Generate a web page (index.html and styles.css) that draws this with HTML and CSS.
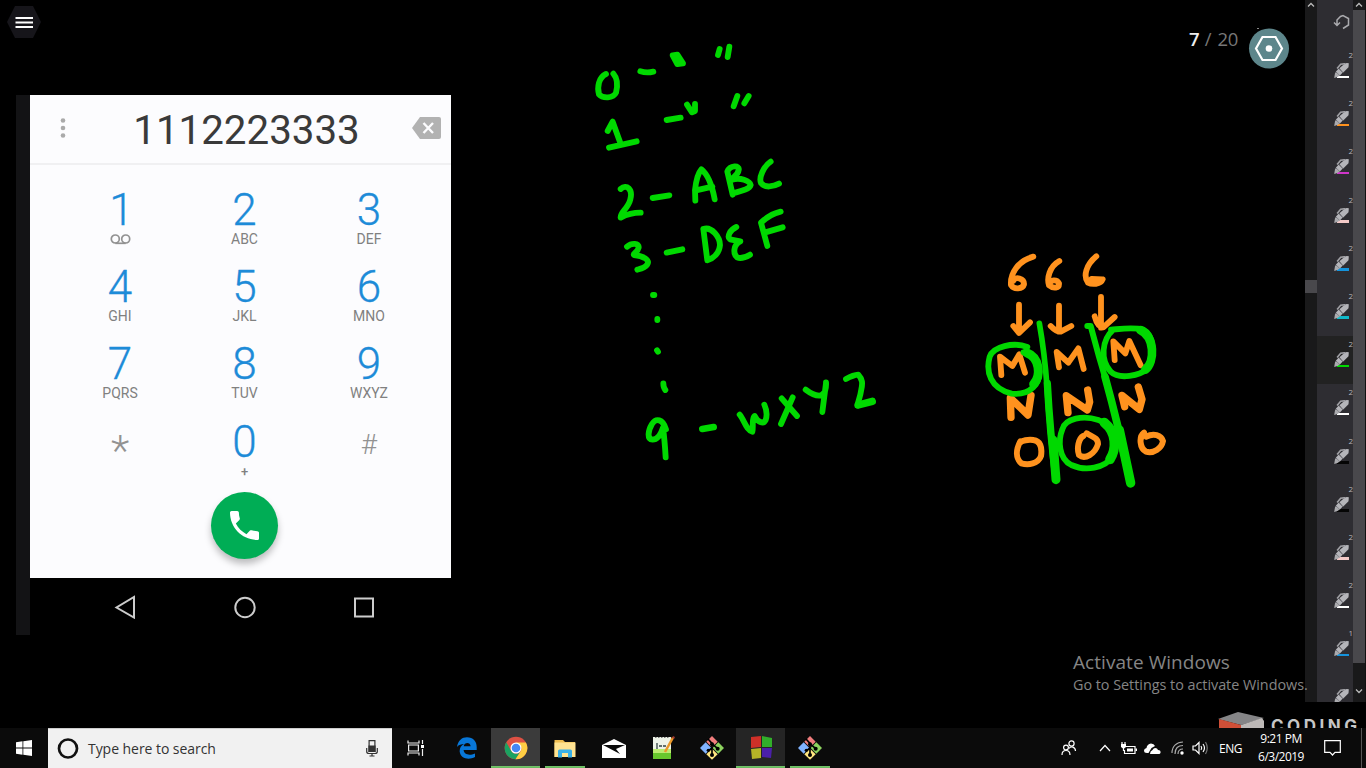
FILE: index.html
```html
<!DOCTYPE html>
<html lang="en">
<head>
<meta charset="utf-8">
<title>Whiteboard</title>
<link rel="stylesheet" href="styles.css">
</head>
<body>
<svg class="defs" width="0" height="0">
  <symbol id="pen" viewBox="0 0 45 46">
    <path d="M0 46L3 29L12 28L17 37L12 42Z" fill="#aaaaae"/>
    <path d="M5 27L14 17L26 29L17 39Z" fill="#b5b5ba"/>
    <path d="M16 16L32 2Q37-1 45 1L44 13L27 30Z" fill="#b5b5ba"/>
    <path d="M9 17L20 4L34 2" fill="none" stroke="#a0a0a5" stroke-width="5"/>
    <path d="M5 27L17 38M15 17L27 29" stroke="#55555a" stroke-width="1.500"/>
  </symbol>
  <symbol id="git" viewBox="0 0 72 72">
    <path d="M36 0L53 17L36 34L19 17Z" fill="#f07d7d"/>
    <path d="M17 19L34 36L17 53L0 36Z" fill="#80b3ff"/>
    <path d="M55 19L72 36L55 53L38 36Z" fill="#8dd35f"/>
    <path d="M36 38L53 55L36 71L19 55Z" fill="#ffe680"/>
    <path d="M24 9L36 22V57M36 23L53 38M36 36L26 44" fill="none" stroke="#000" stroke-width="5"/>
    <circle cx="36" cy="25" r="6"/><circle cx="53" cy="38" r="6"/><circle cx="36" cy="57" r="6"/><circle cx="25" cy="43" r="5"/>
  </symbol>
</svg>

<main class="workspace">
  <section class="board">
    <header class="board-head">
      <svg class="menu" width="36" height="34" viewBox="0 0 36 34"><path d="M9 1H27L35 17L27 33H9L1 17Z" fill="#16151a"/><path d="M9.500 13H27M9.500 17.500H27M9.500 22H27" stroke="#fff" stroke-width="2"/></svg>
      <div class="pager"><b>7</b><span>/</span><span>20</span></div>
      <svg class="badge" width="42" height="42" viewBox="0 0 42 42"><circle cx="21" cy="21.500" r="20" fill="#5d868b"/><path d="M14.500 10H27.500L34 21.500L27.500 33H14.500L8 21.500Z" fill="none" stroke="#fff" stroke-width="2.200"/><circle cx="21" cy="21.500" r="3.300" fill="#fff"/><path d="M9 1.500h2" stroke="#888"/></svg>
    </header>

    <div class="phone">
      <div class="screen">
        <div class="dialed">
          <svg width="6" height="22" viewBox="0 0 6 22" fill="#aaa"><circle cx="3" cy="3.500" r="2.300"/><circle cx="3" cy="11" r="2.300"/><circle cx="3" cy="18.500" r="2.300"/></svg>
          <div class="number">1112223333</div>
          <svg width="29" height="22" viewBox="0 0 29 22"><path d="M8 0H27Q29 0 29 2V20Q29 22 27 22H8L0 11Z" fill="#b2b2b2"/><path d="M11.500 6L21 16M21 6L11.500 16" stroke="#fcfcfe" stroke-width="2.400"/></svg>
        </div>
        <div class="keys">
          <div class="key one"><b>1</b><svg class="vm" width="21" height="11" viewBox="0 0 21 11" fill="none" stroke="#929292" stroke-width="1.700"><circle cx="5.300" cy="5" r="4"/><circle cx="15.700" cy="5" r="4"/><path d="M5.300 9.300H15.700"/></svg></div>
          <div class="key"><b>2</b><span>ABC</span></div>
          <div class="key"><b>3</b><span>DEF</span></div>
          <div class="key"><b>4</b><span>GHI</span></div>
          <div class="key"><b>5</b><span>JKL</span></div>
          <div class="key"><b>6</b><span>MNO</span></div>
          <div class="key"><b>7</b><span>PQRS</span></div>
          <div class="key"><b>8</b><span>TUV</span></div>
          <div class="key"><b>9</b><span>WXYZ</span></div>
          <div class="key sym star"><b>*</b></div>
          <div class="key"><b>0</b><span class="plus">+</span></div>
          <div class="key sym hash"><b>#</b></div>
        </div>
        <div class="call"><svg width="29" height="29" viewBox="3 3 18 18"><path fill="#fff" d="M6.620 10.790c1.440 2.830 3.760 5.140 6.590 6.590l2.200-2.200c.27-.27.67-.36 1.020-.24 1.120.37 2.330.57 3.570.57.55 0 1 .45 1 1V20c0 .55-.45 1-1 1-9.390 0-17-7.610-17-17 0-.55.45-1 1-1h3.500c.55 0 1 .45 1 1 0 1.250.2 2.450.57 3.570.11.35.03.74-.25 1.020l-2.200 2.200z"/></svg></div>
      </div>
      <div class="nav">
        <svg width="24" height="24" viewBox="0 0 24 24"><path d="M21 2V22.500L3.500 12.500Z"/></svg>
        <svg width="24" height="24" viewBox="0 0 24 24"><circle cx="12" cy="12.500" r="9.700"/></svg>
        <svg width="24" height="24" viewBox="0 0 24 24"><rect x="3" y="3.500" width="18" height="18"/></svg>
      </div>
    </div>

    <svg class="ink" width="1305" height="728" viewBox="0 0 1305 728">
      <g class="green" transform="translate(580 30) scale(.33333)">
        <path d="M78 132C56 142 51 172 57 193C68 206 100 206 108 188C114 165 112 145 100 131M181 124Q200 130 220 125M278 76L292 102L309 100L292 74ZM419 57L414 75M448 50L443 81"/>
        <path d="M83 303L98 275L123 344M87 353L170 334M260 270L302 263M321 224L336 247L345 243L345 222M472 198L461 229M506 198L493 220"/>
        <path d="M122 477C140 461 159 478 151 508C145 535 119 548 122 563Q150 548 182 548M218 504L268 496M346 512L345 480Q350 434 364 418C385 435 397 470 404 508M345 482L397 470M458 494L442 425C450 405 480 405 476 420C474 435 460 440 454 450C480 440 510 453 512 465C508 480 475 485 458 490M572 395C550 410 536 443 543 459C555 475 580 470 597 461"/>
        <path d="M141 650C155 638 178 639 176 653C173 668 158 670 162 675C190 678 211 690 202 703C195 714 180 717 172 719M260 668L307 658M370 597L382 691M370 597C395 588 420 622 420 645C418 670 400 685 382 691M469 591C450 600 440 620 450 628L481 634C458 645 460 673 471 682C485 688 500 680 510 674M562 648L543 578C560 562 580 550 602 545M556 607L608 592"/>
      </g>
      <g class="green" transform="translate(580 270) scale(.33333)">
        <path d="M219 75H223M232 147V150M231 241L234 245M250 340Q250 353 256 360"/>
        <path d="M258 478C248 446 228 444 216 462C204 482 200 508 218 509C234 509 243 492 249 473Q254 510 257 562"/>
        <path d="M367 477L401 471" stroke-width="20"/>
        <path d="M479 434C493 450 498 480 517 485C521 470 514 445 524 438C532 455 550 465 557 450C562 435 558 415 553 404M605 385L651 438M638 382L603 462M677 359C690 369 708 378 720 377C737 372 739 350 738 337M738 340L727 426M798 327Q820 315 835 314C848 328 848 340 844 358C841 380 834 395 832 407"/>
        <path d="M835 405L877 394" stroke-width="22"/>
      </g>
      <g class="orange" transform="translate(970 240) scale(.33333)">
        <path d="M190 50C145 62 120 100 123 135C132 150 158 147 162 133C163 115 135 108 130 122M268 63C238 80 230 115 237 136C250 147 268 145 267 130C260 117 240 120 240 130M379 49C348 75 339 108 354 128C365 134 392 134 398 118L365 117"/>
        <path d="M147 194V278M130 258L147 279L180 247M267 197V275M242 258Q259 276 272 275L304 258M393 171V263M374 229Q382 261 400 262L434 231"/>
        <path d="M94 405L90 350L127 378L148 343L165 398M267 382L260 336L295 368L325 325L341 387M434 360L430 304L466 340L478 303L512 376"/>
        <path d="M123 532L121 474L174 525L183 466M294 518L289 467L352 510L359 486L353 450M464 500L456 466L508 508L516 478L505 441" stroke-width="22"/>
        <path d="M151 604C137 630 137 655 154 670C175 676 204 672 213 648C217 620 211 603 190 600C175 597 155 602 151 608M340 588C325 596 320 626 327 645C345 660 375 642 384 612C384 592 365 590 350 580M522 578C506 590 509 625 528 635C550 642 575 625 579 603C574 585 550 578 529 590" stroke-width="18"/>
      </g>
      <g class="green" transform="translate(970 240) scale(.33333)">
        <path d="M208 250Q224 340 231 440Q240 590 258 720" stroke-width="17"/>
        <path d="M232 430Q240 580 258 718" stroke-width="22"/>
        <path d="M249 600L258 719" stroke-width="27"/>
        <path d="M352 258L362 258Q386 350 412 435Q444 550 482 729" stroke-width="18"/>
        <path d="M405 410Q444 550 482 729" stroke-width="23"/>
        <path d="M448 570L482 729" stroke-width="28"/>
        <path d="M172 321C130 305 70 320 59 350C47 395 60 445 125 461C180 467 215 430 206 386C199 355 185 341 160 337"/>
        <path d="M170 338C211 353 213 408 191 432" stroke-width="27"/>
        <path d="M430 269C395 300 390 360 422 395C448 420 510 407 532 386C557 350 552 285 520 269C490 261 450 267 423 269"/>
        <path d="M511 270C555 291 555 365 526 389" stroke-width="26"/>
        <path d="M385 540C340 525 285 535 277 568C264 600 265 655 304 675C345 694 405 686 429 648C448 610 433 555 385 540"/>
        <path d="M403 548C441 578 439 628 420 658" stroke-width="29"/>
      </g>
    </svg>

    <div class="activate"><strong>Activate Windows</strong><span>Go to Settings to activate Windows.</span></div>
  </section>

  <aside class="rail">
    <div class="track left"><svg width="8" height="5" viewBox="0 0 8 5"><path d="M1 4.500L4 1.500L7 4.500"/></svg><i class="thumb"></i></div>
    <div class="tools">
      <div class="undo"><svg width="18" height="17" viewBox="0 0 18 17" fill="none" stroke="#aaaaae" stroke-width="1.500"><path d="M4 11V6L7.500 2.500L10 1.500L15.500 4.500V11L10 14.500M1 8.500L4 11.500L7 8.500"/></svg></div>
      <div class="tool white"><em>2</em><svg width="15" height="15"><use href="#pen"/></svg><i></i></div>
      <div class="tool amber"><em>2</em><svg width="15" height="15"><use href="#pen"/></svg><i></i></div>
      <div class="tool magenta"><em>2</em><svg width="15" height="15"><use href="#pen"/></svg><i></i></div>
      <div class="tool pink"><em>2</em><svg width="15" height="15"><use href="#pen"/></svg><i></i></div>
      <div class="tool blue"><em>2</em><svg width="15" height="15"><use href="#pen"/></svg><i></i></div>
      <div class="tool cyan"><em>2</em><svg width="15" height="15"><use href="#pen"/></svg><i></i></div>
      <div class="tool lime selected"><em>2</em><svg width="15" height="15"><use href="#pen"/></svg><i></i></div>
      <div class="tool white"><em>2</em><svg width="15" height="15"><use href="#pen"/></svg><i></i></div>
      <div class="tool black"><em>2</em><svg width="15" height="15"><use href="#pen"/></svg><i></i></div>
      <div class="tool black"><em>2</em><svg width="15" height="15"><use href="#pen"/></svg><i></i></div>
      <div class="tool pink"><em>2</em><svg width="15" height="15"><use href="#pen"/></svg><i></i></div>
      <div class="tool white"><em>2</em><svg width="15" height="15"><use href="#pen"/></svg><i></i></div>
      <div class="tool blue"><em>1</em><svg width="15" height="15"><use href="#pen"/></svg><i></i></div>
      <div class="tool last"><em></em><svg width="15" height="15"><use href="#pen"/></svg></div>
    </div>
    <div class="track right"><svg width="8" height="5" viewBox="0 0 8 5"><path d="M1 4.500L4 1.500L7 4.500"/></svg><i class="thumb"></i><svg width="8" height="5" viewBox="0 0 8 5"><path d="M1 .5L4 3.500L7 .5"/></svg></div>
  </aside>

  <div class="brand"><svg width="48" height="17" viewBox="0 0 48 17"><path d="M0 8L20 1L46 7L23 14Z" fill="#858587"/><path d="M1 8L23 14V17H1Z" fill="#cf4f37"/><path d="M23 14L44 7L46 10V17H23Z" fill="#bdb9b7"/></svg><span>CODING</span></div>
</main>

<footer class="taskbar">
  <div class="start"><svg width="16" height="16" viewBox="0 0 16 16" fill="#fff"><path d="M0 2.200L6.500 1.300V7.600H0ZM7.300 1.200L16 0V7.600H7.300ZM0 8.400H6.500V14.700L0 13.800ZM7.300 8.400H16V16L7.300 14.800Z"/></svg></div>
  <div class="search">
    <svg width="22" height="22" viewBox="0 0 22 22"><circle cx="11" cy="10.500" r="9" fill="none" stroke="#111" stroke-width="2.700"/></svg>
    <span>Type here to search</span>
    <svg width="12" height="17" viewBox="0 0 12 17" fill="none" stroke="#333" stroke-width="1.200"><path d="M3.100.6H8.900V11.400H3.100Z"/><path d="M3 6H9V11.500H3Z" fill="#333"/><path d="M.7 8V11.500Q.7 13.500 3 13.500H9Q11.300 13.500 11.300 11.500V8M6 13.500V16M3.500 16H8.500"/></svg>
  </div>
  <div class="taskview"><svg width="18" height="16" viewBox="0 0 18 16" fill="none" stroke="#eee" stroke-width="1.200"><path d="M1 .5V3H12V.5M1.600 5H11.400V11H1.600ZM1 15.500V13H12V15.500M15.500 0V4M15.500 9V16"/><path d="M14 5H17V8H14Z" fill="#fff" stroke="none"/></svg></div>
  <div class="apps">
    <div class="app"><svg width="22" height="22" viewBox="0 0 22 22"><path d="M1 10C2 3.500 6 .3 11 .3C17 .3 20.700 4.500 20.700 10V13H7.600C8 17 12.800 19.300 19 16.400V20.100C12.500 23.600 4.500 21.500 3.700 14.800C3.400 11.200 5 8.500 8 7C5.500 7 2.700 7.800 1 10ZM7.700 9.200H14.600C14.600 5.200 8.500 4.500 7.700 9.200Z" fill="#0877d8" fill-rule="evenodd"/></svg></div>
    <div class="app open on"><svg width="24" height="24" viewBox="0 0 24 24"><circle cx="12" cy="12" r="11.300" fill="#dd5144"/><path d="M2.200 6.300A11.300 11.300 0 0 0 11.500 23.300L17 14.700A5.600 5.600 0 0 1 7.100 14.700Z" fill="#1ba261"/><path d="M12 6.500H21.900A11.300 11.300 0 0 1 11.500 23.300L17 14.700Q19 10 12 6.500Z" fill="#ffce43"/><circle cx="12" cy="12" r="5.500" fill="#fff"/><circle cx="12" cy="12" r="4.300" fill="#4587f3"/></svg></div>
    <div class="app open"><svg width="22" height="19" viewBox="0 0 22 19"><path d="M.5 1H9L11 3H21V18H.5Z" fill="#efbd4f"/><path d="M.5 3.500H21.500V18H.5Z" fill="#ffe391"/><path d="M4 18V12Q4 10.500 5.500 10.500H16.500Q18 10.500 18 12V18.500H14V14H8V18.500H4Z" fill="#3ab0e6"/></svg></div>
    <div class="app"><svg width="24" height="19" viewBox="0 0 24 19"><path d="M0 6L12 0L24 6V19H0Z" fill="#fff"/><path d="M1 6H23L14 10L18 15L1 6Z" fill="#0b0b0b"/></svg></div>
    <div class="app"><svg width="24" height="24" viewBox="0 0 24 24"><path d="M2 1H20V23H2Z" fill="#eef3e8"/><path d="M2 16H20V23H2Z" fill="#67c72d"/><path d="M2 13H20V17H2Z" fill="#bbec70"/><path d="M4 1.500H19" stroke="#777" stroke-dasharray="1.500 1.500"/><path d="M6 7V13M8 10H11M12 10H15" stroke="#344" stroke-width="1.300"/><path d="M22 1.500L14 16" stroke="#e99829" stroke-width="2.500"/><path d="M21.500 1L23.500 2" stroke="#a43d31" stroke-width="2"/></svg></div>
    <div class="app"><svg width="24" height="24"><use href="#git"/></svg></div>
    <div class="app open dim"><svg width="22" height="24" viewBox="0 0 22 24"><path d="M1 1L11 0V11L1 12Z" fill="#cf3028"/><path d="M12 0L22 2V11H12Z" fill="#31ae2a"/><path d="M1 13L11 12V22L2 23Z" fill="#b5b327"/><path d="M12 12H22L21 22L12 21Z" fill="#4b20aa"/></svg></div>
    <div class="app open"><svg width="24" height="24"><use href="#git"/></svg></div>
  </div>
  <div class="tray">
    <svg class="people" width="16" height="16" viewBox="0 0 16 16"><circle cx="10.500" cy="3.500" r="2.600"/><circle cx="5" cy="7.500" r="2.400"/><path d="M1 15C1 9 9 9 9 15M8 8.500C10 5.500 14.500 7 14.500 11"/></svg>
    <svg class="chev" width="12" height="8" viewBox="0 0 12 8"><path d="M1 7L6 1.500L11 7"/></svg>
    <svg class="batt" width="17" height="13" viewBox="0 0 17 13"><path d="M5 4.500H15V11.500H4.500V8"/><path d="M7 6.500H13V9.500H7ZM1 2H6V5L4 6.500H3L1 5ZM15.500 6.500H17V9H15.500Z" fill="#fff" stroke="none"/><path d="M2 0V2M5 0V2M3.500 6V9"/></svg>
    <svg class="cloud" width="17" height="11" viewBox="0 0 17 11"><path d="M3 10Q0 10 0 7.500Q0 5.500 2.500 5Q3 1 7 .5Q10 .5 11 3L7.500 5L4.500 10ZM6 11Q6 8 8.500 7Q10 4 13 5.500L14 7Q17 7 16.500 10L15.500 11Z" fill="#fff" stroke="none"/></svg>
    <svg class="wifi" width="13" height="14" viewBox="0 0 13 14"><g stroke="#aaa"><path d="M1 12C1 5 6 1 12 1M4 13C4 7 7 4.500 12 4.500M7 13C7 10 9 8 12 8"/></g><circle cx="11" cy="12" r="1.700" fill="#fff" stroke="none"/></svg>
    <svg class="vol" width="16" height="14" viewBox="0 0 16 14"><path d="M1 5H3.500L7 1.500V12.500L3.500 9H1Z"/><path d="M9 5Q10.500 7 9 9M11 3Q14 7 11 11"/><path d="M13.500 1Q17 7 13.500 13" stroke="#777"/></svg>
    <span class="lang">ENG</span>
    <div class="clock"><span>9:21 PM</span><span>6/3/2019</span></div>
    <svg class="note" width="17" height="16" viewBox="0 0 17 16"><path d="M.7.7H16.300V12.300H11L8.500 15L6 12.300H.7Z"/></svg>
    <i class="edge"></i>
  </div>
</footer>
</body>
</html>
```
FILE: styles.css
```css
* { box-sizing: border-box; }
body { margin: 0; width: 1366px; height: 768px; overflow: hidden; display: flex; flex-direction: column; background: #000; font-family: "Open Sans", "Noto Sans", sans-serif; }
svg { display: block; flex: none; }
.defs { position: absolute; }
.workspace { height: 728px; display: flex; position: relative; overflow: hidden; }
.board { width: 1305px; height: 728px; }
.board-head { height: 95px; display: flex; align-items: flex-start; padding: 5px 15px 0 6px; }
.pager { margin: 20px 10px 0 auto; display: flex; gap: 5px; font-size: 18.500px; line-height: 28px; color: #777; }
.pager b { font-weight: 600; color: #eee; }
.pager span:last-child { margin-left: 1px; letter-spacing: -.3px; }
.badge { margin-top: 22px; }

.phone { width: 435px; height: 540px; margin-left: 16px; border-left: 14px solid #131315; font-family: Roboto, sans-serif; }
.screen { height: 483px; background: #fcfcfe; }
.dialed { height: 70px; border-bottom: 2px solid #f0f0f2; display: flex; align-items: center; padding: 0 10px 3px 30px; }
.dialed .number { flex: 1; text-align: center; font-size: 40.300px; line-height: 46px; color: #3a3a3a; padding: 6px 0 0 28px; margin-right: 13px; }
.keys { height: 327px; display: grid; grid-template-columns: repeat(3, 124.500px); grid-auto-rows: 77.200px; justify-content: center; padding-top: 23px; margin-left: 8px; }
.key { display: flex; flex-direction: column; align-items: center; }
.key b { font-weight: 300; font-size: 44px; line-height: 45px; height: 45px; color: #1d8bd8; -webkit-text-stroke: .3px #1d8bd8; }
.key.one b { padding-left: 3px; }
.key span { font-size: 14px; line-height: 13px; color: #808080; }
.key .plus { font-size: 13px; font-weight: 500; }
.vm { margin-top: 1px; }
.key.sym b { color: #929292; -webkit-text-stroke: 0; }
.key.star b { font-size: 43px; line-height: 60px; }
.key.hash b { font-size: 28px; line-height: 50px; }
.call { width: 67px; height: 67px; margin: 0 auto; transform: translateX(4px); border-radius: 50%; background: #00ad55; box-shadow: 0 5px 7px rgba(0,0,0,.25); display: flex; align-items: center; justify-content: center; }
.nav { display: flex; align-items: center; padding: 17px 0 0 83px; gap: 95.700px; }
.nav svg { fill: none; stroke: #ccc; stroke-width: 2; }

.ink { position: absolute; left: 0; top: 0; fill: none; stroke-linecap: round; stroke-linejoin: round; }
.ink g { stroke-width: 17.500; }
.green { stroke: #00d900; }
.orange { stroke: #ff921e; }

.activate { width: 240px; margin: 15px 0 0 1073px; display: flex; flex-direction: column; color: #858585; position: relative; z-index: 2; white-space: nowrap; }
.activate strong { font-weight: 400; font-size: 19px; line-height: 24px; letter-spacing: .06px; }
.activate span { font-size: 14.400px; line-height: 21px; letter-spacing: -.03px; }

.rail { width: 61px; height: 702px; display: flex; border-right: 1px solid #111; background: #2e2d32; overflow: hidden; }
.track { width: 12px; background: #19191a; display: flex; flex-direction: column; align-items: center; padding-top: 2px; }
.track svg { fill: none; stroke: #bbb; stroke-width: 1.300; }
.track .thumb { width: 12px; background: #49484c; }
.left .thumb { margin-top: 273px; height: 13px; }
.right .thumb { margin: 3px 0 26px; height: 653px; }
.tools { width: 36px; overflow: hidden; }
.undo { height: 47px; padding: 14px 0 0 16px; }
.tool { height: 48.200px; flex: none; padding: 2px 0 0 17px; }
.tool em { display: block; height: 12px; line-height: 12px; font-style: normal; font-size: 8px; text-align: right; margin-right: 0; color: #b5b5b8; }
.tool svg { margin-top: 2px; }
.tool i { display: block; width: 12px; height: 2.500px; margin: -2.500px 0 0 3px; background: #fff; }
.selected { background: #222; }
.amber i { background: #ff921e; }
.magenta i { background: #cf35c9; }
.pink i { background: #f4cac8; }
.blue i { background: #1593dc; }
.cyan i { background: #10b9c9; }
.lime i { background: #00d900; }
.black i { background: #050505; }

.brand { position: absolute; left: 1218px; top: 711px; display: flex; color: #c6c6c6; font: 700 17px/20px Inter, sans-serif; letter-spacing: 3.500px; }
.brand span { margin: 5px 0 0 5px; }

.taskbar { height: 40px; background: #0b0b0b; color: #fff; display: flex; }
.start { width: 48px; padding: 12px 0 0 16px; }
.search { width: 344px; background: #f1f1f1; border-top: 1px solid #ccc; display: flex; align-items: center; padding: 0 14px 0 9px; color: #333; font-size: 14px; letter-spacing: -.05px; }
.search span { margin-left: 9px; flex: 1; padding-bottom: 1px; }
.taskview { width: 50px; padding: 12px 0 0 15px; }
.apps { display: flex; }
.app { width: 49px; height: 40px; display: flex; align-items: center; justify-content: center; }
.app.open { background: linear-gradient(#76c76b, #64b65e) center bottom / 40px 2px no-repeat; }
.app.on { background-color: #3b3b3b; background-size: 100% 2px; }
.app.dim { background-color: #252525; background-size: 100% 2px; }
.tray { margin-left: 227px; flex: 1; display: flex; align-items: center; }
.tray svg { fill: none; stroke: #fff; stroke-width: 1.200; }
.chev { margin-left: 22px; }
.batt { margin-left: 9px; }
.cloud { margin-left: 7px; }
.wifi { margin-left: 10px; }
.vol { margin-left: 8px; }
.lang { margin-left: 11px; width: 24px; font-size: 12px; letter-spacing: -.5px; }
.clock { margin-left: 10px; width: 56px; display: flex; flex-direction: column; text-align: center; font-size: 12px; line-height: 18px; letter-spacing: -.5px; white-space: nowrap; align-items: center; }
.note { margin: 0 0 0 15px; }
.edge { width: 1px; height: 40px; margin: 0 4px 0 auto; background: #555; }
```
